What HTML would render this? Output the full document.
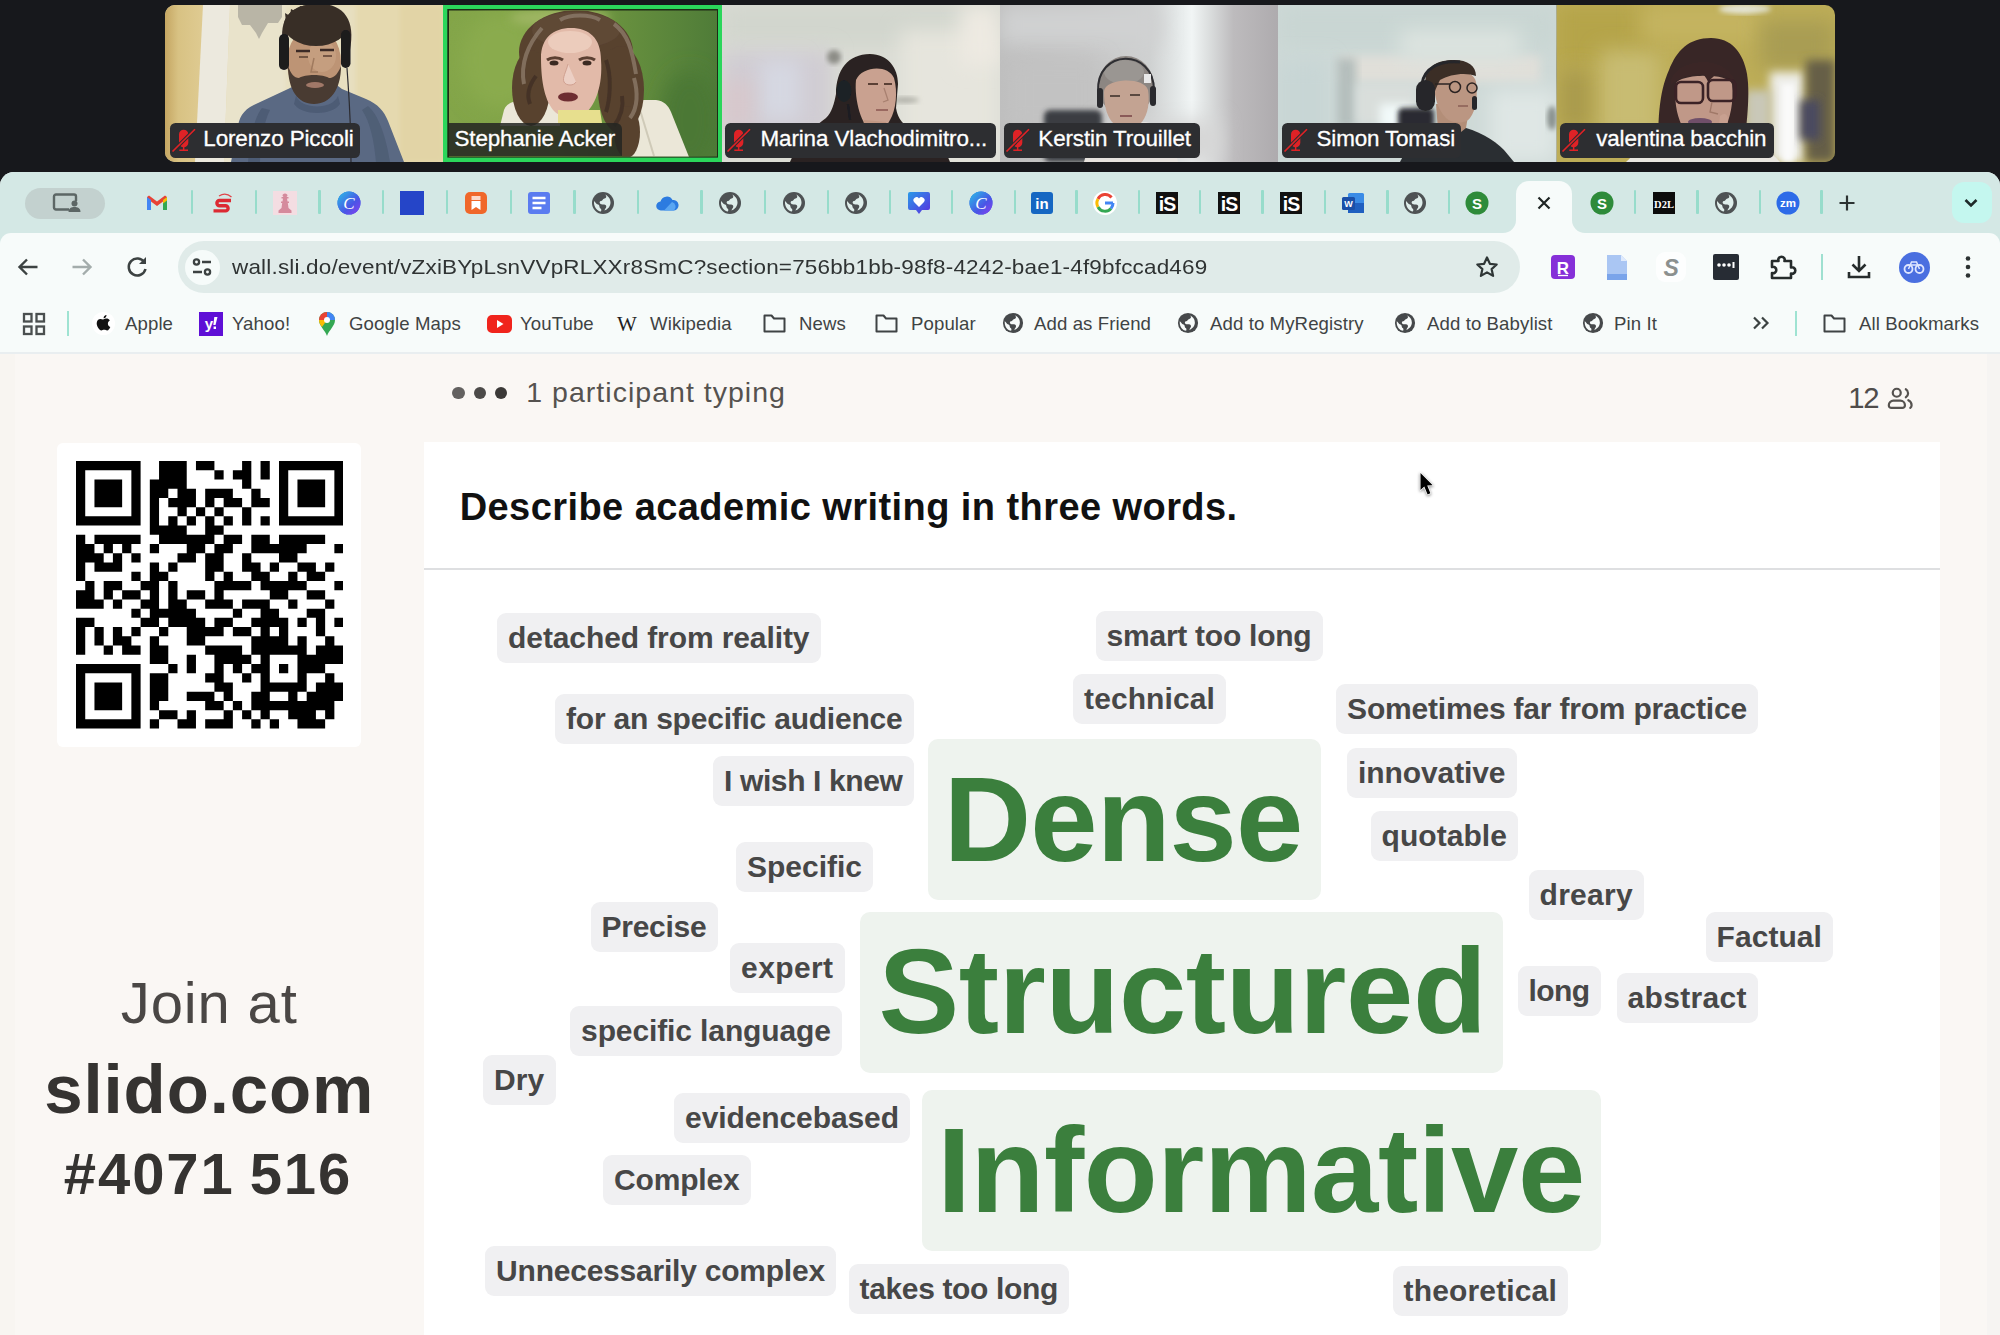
<!DOCTYPE html>
<html><head><meta charset="utf-8"><title>Slido</title><style>
*{box-sizing:border-box;margin:0;padding:0}
html,body{width:2000px;height:1335px;overflow:hidden;background:#17181c;font-family:"Liberation Sans",sans-serif}
.abs{position:absolute}
#win{position:absolute;left:0;top:172px;width:2000px;height:1163px;background:#f7fbfa;border-radius:14px 14px 0 0;overflow:hidden}
#page{position:absolute;left:0;top:181.5px;width:2000px;height:982px;background:#faf7f4}
#card{position:absolute;left:423.5px;top:88.5px;width:1516.5px;height:900px;background:#fff}
#qrc{position:absolute;left:57px;top:89px;width:304px;height:304px;background:#fff;border-radius:6px}
.tg{position:absolute;background:#f0f0f2;border-radius:9px;color:#474747;font-weight:700;font-size:30px;line-height:50px;white-space:nowrap;overflow:visible}
.bg{position:absolute;background:#eef3ee;border-radius:10px;color:#3b7f3d;font-weight:700;font-size:121px;white-space:nowrap}
.bg span{position:absolute;line-height:1}
.nm{position:absolute;top:123.2px;color:#fff;font-size:22.4px;line-height:36px;white-space:nowrap;overflow:hidden}
.nm span{position:absolute;top:-2.1px;-webkit-text-stroke:0.3px #fff}

#tabs{position:absolute;left:0;top:0;width:2000px;height:74px;background:#d4e8e5}
#tbar{position:absolute;left:0;top:60.5px;width:2000px;height:30px;background:#f7fbfa;border-radius:11px 11px 0 0}
.sep{position:absolute;top:18px;width:2.4px;height:24px;background:#97dccb;border-radius:1px}
.ti{position:absolute;top:19px;width:24px;height:24px}
.bk{position:absolute;top:140px;font-size:18.6px;line-height:24px;color:#3f4344;white-space:nowrap}
.bi{position:absolute}
#url{position:absolute;left:178px;top:69px;width:1342px;height:51.5px;border-radius:26px;background:#e0ebe9}
#urlt{position:absolute;left:231.5px;top:83px;font-size:20.4px;line-height:24px;color:#2f3333;white-space:nowrap;letter-spacing:0.16px;transform:scaleX(1.103);transform-origin:0 0}
</style></head>
<body>
<svg class="abs" style="left:165px;top:5px" width="1670" height="157" viewBox="165 5 1670 157"><defs><filter id="b05" x="-10%" y="-10%" width="120%" height="120%"><feGaussianBlur stdDeviation="0.700"/></filter><filter id="b1" x="-20%" y="-20%" width="140%" height="140%"><feGaussianBlur stdDeviation="1.200"/></filter><filter id="b2" x="-20%" y="-20%" width="140%" height="140%"><feGaussianBlur stdDeviation="2.500"/></filter><filter id="b4" x="-30%" y="-30%" width="160%" height="160%"><feGaussianBlur stdDeviation="5"/></filter><filter id="b8" x="-50%" y="-50%" width="200%" height="200%"><feGaussianBlur stdDeviation="10"/></filter><clipPath id="c1"><path d="M175 5h268v157H175a10 10 0 0 1-10-10V15a10 10 0 0 1 10-10z"/></clipPath><clipPath id="c2"><rect x="449" y="10.400" width="268" height="146"/></clipPath><clipPath id="c3"><rect x="722" y="5" width="278" height="157"/></clipPath><clipPath id="c4"><rect x="1000" y="5" width="278" height="157"/></clipPath><clipPath id="c5"><rect x="1278" y="5" width="278.700" height="157"/></clipPath><clipPath id="c6"><path d="M1556.700 5H1825a10 10 0 0 1 10 10v137a10 10 0 0 1-10 10H1556.700z"/></clipPath><linearGradient id="lw" x1="0" x2="1"><stop offset="0" stop-color="#c5a662"/><stop offset=".35" stop-color="#d8c283"/><stop offset="1" stop-color="#dfcb92"/></linearGradient><linearGradient id="g2" x1="0" x2="1"><stop offset="0" stop-color="#83a549"/><stop offset=".4" stop-color="#7ea245"/><stop offset=".6" stop-color="#6a923f"/><stop offset="1" stop-color="#4f7c38"/></linearGradient><linearGradient id="g4" x1="0" x2="1"><stop offset="0" stop-color="#bebebe"/><stop offset=".3" stop-color="#c5c5c5"/><stop offset=".54" stop-color="#cfd1d1"/><stop offset=".63" stop-color="#e2e6e6"/><stop offset=".69" stop-color="#f1f5f5"/><stop offset=".75" stop-color="#dcdfdf"/><stop offset=".84" stop-color="#bdbbbd"/><stop offset="1" stop-color="#aeabae"/></linearGradient></defs><g clip-path="url(#c1)"><rect x="165" y="5" width="278" height="157" fill="#e5d9af"/><rect x="165" y="5" width="38" height="157" fill="url(#lw)"/><path d="M203 5h27l-6 157h-29z" fill="#ece9de"/><path d="M230 5h60v157h-66z" fill="#e9e3cb"/><rect x="286" y="5" width="70" height="157" fill="#e7dfc0" filter="url(#b2)"/><path d="M238 5h44v12l-4 6h-10l-6 10-3 6-3-6-6-8h-8l-4-8z" fill="#b9b5a6" filter="url(#b05)"/><rect x="400" y="5" width="43" height="157" fill="#e2d4a6" filter="url(#b2)"/><g filter="url(#b05)"><path d="M231 162l7-36c2-12 8-18 20-23l30-14 12-6h34l8 6 24 10c12 5 18 12 22 22l16 41z" fill="#5a6983"/><path d="M262 108c-8 10-12 30-14 54h12c0-20 4-40 10-52z" fill="#48566e" opacity=".7"/><path d="M368 106c10 8 18 30 22 56h-14c-2-22-6-40-14-52z" fill="#48566e" opacity=".6"/><path d="M298 84c4 20 32 22 38 0l-2-14h-34z" fill="#b48c6c"/><path d="M296 96c6 14 36 14 42 0l2 8c-8 12-38 12-46 0z" fill="#4d5b75"/><ellipse cx="314" cy="62" rx="27" ry="35" fill="#bd9474"/><ellipse cx="322" cy="56" rx="14" ry="16" fill="#c9a284" opacity=".7"/><path d="M288 66c0 24 10 38 26 38s27-14 27-38c-4 10-8 12-12 12-6-4-24-4-30 0-5 0-8-4-11-12z" fill="#4a3a30"/><ellipse cx="315" cy="85" rx="9" ry="3" fill="#a07868"/><path d="M284 52c-6-30 2-46 30-48 30-2 42 16 36 46-2-14-8-22-14-24-10 4-28 4-40 0-6 4-10 12-12 26z" fill="#382e28"/><ellipse cx="316" cy="25" rx="32" ry="21" fill="#382e28"/><path d="M286 22l-1-9 5 3 1-7 6 3 3-6 6 3 5-4 5 4 6-3 4 5 6-2 2 6 6-1-1 8 5 1-4 8z" fill="#382e28"/><rect x="279" y="34" width="10" height="36" rx="5" fill="#1a1a1e"/><rect x="341" y="30" width="9.500" height="38" rx="4.700" fill="#1a1a1e"/><path d="M347 68c2 30 4 50 4 94" stroke="#2c2c30" stroke-width="1.200" fill="none"/><path d="M296 51h14M320 50h14" stroke="#3a2c26" stroke-width="2.500"/><path d="M299 57h9M323 56h9" stroke="#5a4032" stroke-width="1.500"/><path d="M314 58l-3 14h7" stroke="#a07a5e" stroke-width="1.500" fill="none"/></g></g><rect x="443" y="5" width="279" height="157" fill="#2bd65b"/><rect x="447.300" y="9" width="270.700" height="148.600" fill="#1f2a16"/><g clip-path="url(#c2)"><rect x="449" y="10" width="268" height="147" fill="url(#g2)"/><ellipse cx="500" cy="60" rx="40" ry="50" fill="#8aab4d" filter="url(#b8)"/><ellipse cx="690" cy="120" rx="30" ry="50" fill="#4b7836" filter="url(#b8)"/><ellipse cx="560" cy="18" rx="50" ry="10" fill="#9db562" filter="url(#b4)"/><g filter="url(#b05)"><path d="M500 126l4-16c2-6 8-9 16-9h40v25zM626 100h30c8 1 12 5 15 12l18 45h-63z" fill="#ebe7d8"/><path d="M640 110l14 46" stroke="#cfcab8" stroke-width="2" fill="none"/><ellipse cx="576" cy="52" rx="57" ry="42" fill="#58422f"/><ellipse cx="531" cy="88" rx="19" ry="38" fill="#58422f"/><ellipse cx="621" cy="90" rx="23" ry="44" fill="#58422f"/><ellipse cx="627" cy="132" rx="13" ry="26" fill="#58422f"/><ellipse cx="576" cy="30" rx="44" ry="18" fill="#5e4836"/><path d="M524 84c-4-20 4-40 18-56M636 74c-4-24-8-40-22-50M630 118c8-10 8-26 4-40M560 20c10-6 30-6 40 0" stroke="#8f7e6c" stroke-width="4" fill="none" opacity=".75"/><path d="M530 104c-4-10 0-20 6-28M614 126c6-8 10-18 8-30M606 60c6 16 4 40 0 52" stroke="#392a20" stroke-width="4" fill="none" opacity=".6"/><path d="M541 58c0-20 12-30 30-30s30 10 30 32c2 26-6 44-14 52-8 6-26 6-32 0-10-10-14-30-14-54z" fill="#e2baa9"/><ellipse cx="570" cy="42" rx="22" ry="11" fill="#ecccbc"/><path d="M558 110h42l2 13h-44z" fill="#e7df8e"/><path d="M547 60c4-3 12-3 16 0M579 60c4-3 12-3 16 0" stroke="#5c4033" stroke-width="3" fill="none"/><ellipse cx="554" cy="63" rx="4.500" ry="2.500" fill="#3a2a22"/><ellipse cx="587" cy="63" rx="4.500" ry="2.500" fill="#3a2a22"/><path d="M568 64c-2 8-6 14-4 18s10 4 12 0" fill="#eccfc4" stroke="#d0a090" stroke-width="1"/><ellipse cx="568" cy="97" rx="10" ry="4.500" fill="#6e2d33"/></g></g><g clip-path="url(#c3)"><rect x="722" y="5" width="278" height="157" fill="#dadcd4"/><rect x="722" y="5" width="278" height="40" fill="#d2d6ce" filter="url(#b8)"/><rect x="900" y="30" width="100" height="132" fill="#e6e5dd" filter="url(#b8)"/><rect x="960" y="5" width="40" height="60" fill="#eeeae2" filter="url(#b8)"/><rect x="722" y="50" width="110" height="90" fill="#d0ccd3" filter="url(#b8)"/><rect x="760" y="60" width="40" height="60" fill="#d6d8e2" filter="url(#b8)"/><rect x="722" y="80" width="30" height="50" fill="#d8c8cc" filter="url(#b8)"/><ellipse cx="834" cy="57" rx="7" ry="7" fill="#8c8c86" filter="url(#b2)"/><ellipse cx="905" cy="100" rx="14" ry="3" fill="#b0b0a8" filter="url(#b2)"/><g filter="url(#b05)"><path d="M790 162c8-20 22-34 36-44 6-6 8-14 10-24 0-24 12-40 34-40 18 0 28 14 28 30l-2 24c2 12 8 16 14 22 8 8 16 20 20 32z" fill="#2c2420"/><path d="M856 80c6-14 32-16 38-2 4 14 2 32-4 42-4 8-10 10-18 10-10-2-18-30-16-50z" fill="#c9a190"/><path d="M864 120l22 2 2 16-26 2z" fill="#c09682"/><ellipse cx="844" cy="91" rx="7.500" ry="11" fill="#1a2028"/><path d="M868 84h10M884 84h8" stroke="#5a4036" stroke-width="2"/><path d="M884 88l4 12-5 2" stroke="#a88070" stroke-width="1.300" fill="none"/><path d="M876 110h12" stroke="#9a6860" stroke-width="2"/><path d="M848 104l2 16" stroke="#1a1c20" stroke-width="2.500"/><path d="M796 162l10-24c14-6 120-6 134 0l10 24z" fill="#2a2220"/></g></g><g clip-path="url(#c4)"><rect x="1000" y="5" width="278" height="157" fill="url(#g4)"/><rect x="1000" y="5" width="160" height="40" fill="#d0d1d2" filter="url(#b8)"/><rect x="1010" y="60" width="90" height="70" fill="#c2c2c2" filter="url(#b8)"/><rect x="1100" y="120" width="120" height="42" fill="#d6d6d6" filter="url(#b8)"/><rect x="1044" y="110" width="58" height="52" rx="6" fill="#3a3c42" filter="url(#b2)"/><g filter="url(#b05)"><path d="M1084 162c6-24 16-36 36-40h26c16 4 26 14 32 40z" fill="#e6e2de"/><ellipse cx="1126" cy="86" rx="28" ry="30" fill="#8c8682"/><ellipse cx="1124" cy="72" rx="20" ry="12" fill="#9a9692"/><path d="M1104 92c0-14 40-16 44-2 2 12 0 24-6 32-6 6-24 6-30 0-6-8-8-18-8-30z" fill="#c3a392"/><path d="M1098 92c-2-44 56-44 56-2" fill="none" stroke="#2e2e32" stroke-width="2"/><rect x="1097" y="88" width="6" height="20" rx="3" fill="#2a2a2e"/><rect x="1150" y="86" width="6" height="20" rx="3" fill="#2a2a2e"/><rect x="1144" y="74" width="7" height="9" fill="#e8e8e8"/><path d="M1110 96h10M1130 95h10" stroke="#5a4840" stroke-width="2"/><path d="M1120 116h12" stroke="#8a5a58" stroke-width="2"/></g></g><g clip-path="url(#c5)"><rect x="1278" y="5" width="279" height="157" fill="#ced9d7"/><rect x="1278" y="5" width="279" height="44" fill="#c9d6d3" filter="url(#b8)"/><rect x="1340" y="56" width="200" height="26" fill="#e0dfd9" filter="url(#b4)"/><rect x="1400" y="30" width="120" height="30" fill="#dde4e0" filter="url(#b8)"/><rect x="1336" y="58" width="20" height="70" fill="#b4bebc" filter="url(#b4)"/><rect x="1356" y="84" width="60" height="40" fill="#d9dedb" filter="url(#b4)"/><rect x="1380" y="104" width="30" height="26" fill="#f2fafa" filter="url(#b4)"/><rect x="1490" y="90" width="67" height="72" fill="#dfe7e5" filter="url(#b8)"/><rect x="1278" y="60" width="50" height="102" fill="#c8d6d5" filter="url(#b8)"/><rect x="1398" y="108" width="36" height="22" rx="5" fill="#2a2c30" filter="url(#b2)"/><ellipse cx="1552" cy="118" rx="5" ry="12" fill="#8a928f" filter="url(#b2)"/><g filter="url(#b05)"><path d="M1400 162c6-12 14-22 30-30l28-6c20 4 36 14 46 24l10 12z" fill="#2c2e32"/><path d="M1436 104h34l-4 24-10 8-18-6z" fill="#b38e78"/><path d="M1434 84c0-16 40-18 42-2 2 14 0 28-6 36-4 6-18 6-24 0-8-8-12-22-12-34z" fill="#bb9682"/><path d="M1426 88c-4-22 12-28 28-28 14 0 22 6 22 16-10-4-26-2-36 4-2 4-4 8-6 14z" fill="#3a2e28"/><rect x="1416" y="80" width="19" height="31" rx="9.500" fill="#27272a"/><path d="M1422 84c2-16 18-24 38-22" fill="none" stroke="#27272a" stroke-width="3"/><rect x="1472" y="96" width="5" height="14" rx="2.500" fill="#27272a"/><circle cx="1455" cy="87" r="5.500" fill="none" stroke="#2c2422" stroke-width="1.500"/><circle cx="1472" cy="88" r="5" fill="none" stroke="#2c2422" stroke-width="1.500"/><path d="M1435 84h15" stroke="#2c2422" stroke-width="1.500"/><path d="M1458 106h10" stroke="#8a5e54" stroke-width="1.500"/></g></g><g clip-path="url(#c6)"><rect x="1556" y="5" width="279" height="157" fill="#bdad57"/><rect x="1556" y="5" width="100" height="60" fill="#b5a44a" filter="url(#b8)"/><rect x="1600" y="50" width="60" height="90" fill="#c8bc72" filter="url(#b8)"/><rect x="1560" y="70" width="30" height="60" fill="#a89a4c" filter="url(#b8)"/><rect x="1640" y="5" width="120" height="36" fill="#c4b460" filter="url(#b8)"/><ellipse cx="1745" cy="9" rx="26" ry="5" fill="#e4e4d4" filter="url(#b2)"/><rect x="1760" y="20" width="75" height="50" fill="#a99d52" filter="url(#b8)"/><rect x="1770" y="72" width="34" height="90" fill="#eeeeea" filter="url(#b4)"/><rect x="1782" y="84" width="12" height="78" fill="#fafafa" filter="url(#b2)"/><rect x="1745" y="90" width="26" height="72" fill="#c9c8b8" filter="url(#b4)"/><rect x="1806" y="60" width="29" height="102" fill="#665f46" filter="url(#b4)"/><rect x="1800" y="100" width="20" height="40" fill="#4a4a60" filter="url(#b4)"/><g filter="url(#b05)"><path d="M1659 162c-2-40 0-70 10-92 8-20 20-32 42-32 20 0 32 14 36 36 4 24-2 60-4 88z" fill="#382626"/><path d="M1676 84c2-10 52-12 56 0 2 18-2 36-8 46-4 8-10 12-18 12-12 0-20-6-24-16-6-12-8-28-6-42z" fill="#c09888"/><path d="M1670 86c0-30 60-34 66-2-6-6-14-10-20-10-4 4-8 8-8 8s-2-6-6-8c-12 0-24 4-32 12z" fill="#3a2626"/><rect x="1676" y="82" width="27" height="21" rx="5" fill="none" stroke="#3a2226" stroke-width="2.600"/><rect x="1708" y="80" width="27" height="21" rx="5" fill="none" stroke="#3a2226" stroke-width="2.600"/><path d="M1712 102l-2 10 8 2" stroke="#a07868" stroke-width="1.300" fill="none"/><path d="M1720 116c4-4 8-2 8 4l-2 14h-8z" fill="#c8a090"/><ellipse cx="1700" cy="122" rx="12" ry="4" fill="#70506a"/><path d="M1626 162c10-10 24-18 44-22h70c16 4 30 10 40 22z" fill="#e8e6e0"/></g></g></svg><div class="nm" style="left:169.5px;width:190.5px;height:34.8px;background:#2d2e31;border-radius:5.5px"><div style="position:absolute;left:0;top:3px"><svg width="28" height="28" viewBox="0 0 28 28"><rect x="9" y="3.700" width="9.300" height="17.600" rx="4.650" fill="#df2226"/><path d="M13.650 21v3M9.300 24.200h8.700" stroke="#df2226" stroke-width="1.500" fill="none"/><path d="M25.300 2.900 2.300 25.700" stroke="#2c2d30" stroke-width="3.600"/><path d="M25 3.250 2.500 25.500" stroke="#df2226" stroke-width="1.700"/></svg></div><span style="left:33.8px;letter-spacing:-0.1px">Lorenzo Piccoli</span></div><div class="nm" style="left:449px;width:173px;height:33.2px;background:rgba(36,37,34,.86);border-radius:0 6px 0 0"><span style="left:5.6px;letter-spacing:-0.18px">Stephanie Acker</span></div><div class="nm" style="left:725.2px;width:271.2px;height:34.8px;background:#2d2e31;border-radius:5.5px"><div style="position:absolute;left:0;top:3px"><svg width="28" height="28" viewBox="0 0 28 28"><rect x="9" y="3.700" width="9.300" height="17.600" rx="4.650" fill="#df2226"/><path d="M13.650 21v3M9.300 24.200h8.700" stroke="#df2226" stroke-width="1.500" fill="none"/><path d="M25.300 2.900 2.300 25.700" stroke="#2c2d30" stroke-width="3.600"/><path d="M25 3.250 2.500 25.500" stroke="#df2226" stroke-width="1.700"/></svg></div><span style="left:35.3px;letter-spacing:-0.1px">Marina Vlachodimitro...</span></div><div class="nm" style="left:1004px;width:195.7px;height:34.8px;background:#2d2e31;border-radius:5.5px"><div style="position:absolute;left:0;top:3px"><svg width="28" height="28" viewBox="0 0 28 28"><rect x="9" y="3.700" width="9.300" height="17.600" rx="4.650" fill="#df2226"/><path d="M13.650 21v3M9.300 24.200h8.700" stroke="#df2226" stroke-width="1.500" fill="none"/><path d="M25.300 2.900 2.300 25.700" stroke="#2c2d30" stroke-width="3.600"/><path d="M25 3.250 2.500 25.500" stroke="#df2226" stroke-width="1.700"/></svg></div><span style="left:34.3px;letter-spacing:-0.1px">Kerstin Trouillet</span></div><div class="nm" style="left:1282px;width:179px;height:34.8px;background:#2d2e31;border-radius:5.5px"><div style="position:absolute;left:0;top:3px"><svg width="28" height="28" viewBox="0 0 28 28"><rect x="9" y="3.700" width="9.300" height="17.600" rx="4.650" fill="#df2226"/><path d="M13.650 21v3M9.300 24.200h8.700" stroke="#df2226" stroke-width="1.500" fill="none"/><path d="M25.300 2.900 2.300 25.700" stroke="#2c2d30" stroke-width="3.600"/><path d="M25 3.250 2.500 25.500" stroke="#df2226" stroke-width="1.700"/></svg></div><span style="left:34.5px;letter-spacing:-0.14px">Simon Tomasi</span></div><div class="nm" style="left:1560px;width:213.8px;height:34.8px;background:#2d2e31;border-radius:5.5px"><div style="position:absolute;left:0;top:3px"><svg width="28" height="28" viewBox="0 0 28 28"><rect x="9" y="3.700" width="9.300" height="17.600" rx="4.650" fill="#df2226"/><path d="M13.650 21v3M9.300 24.200h8.700" stroke="#df2226" stroke-width="1.500" fill="none"/><path d="M25.300 2.900 2.300 25.700" stroke="#2c2d30" stroke-width="3.600"/><path d="M25 3.250 2.500 25.500" stroke="#df2226" stroke-width="1.700"/></svg></div><span style="left:36.3px;letter-spacing:-0.18px">valentina bacchin</span></div>
<div id="win">
<div id="tabs"><div class="abs" style="left:25px;top:15.5px;width:80px;height:31px;border-radius:16px;background:#c3d1cf"></div><svg class="abs" style="left:52px;top:20px" width="30" height="22" viewBox="0 0 30 22"><path d="M17 17.500H4a2 2 0 0 1-2-2V4.500a2 2 0 0 1 2-2h18a2 2 0 0 1 2 2V9" fill="none" stroke="#5c6665" stroke-width="2.400"/><circle cx="22.500" cy="11.500" r="3" fill="#5c6665"/><path d="M16.500 20c0-4 3-5 6-5s6 1 6 5z" fill="#5c6665"/></svg><div class="abs" style="left:1516px;top:9px;width:56px;height:52px;background:#f7fbfa;border-radius:13px 13px 0 0"></div><svg class="abs" style="left:1503px;top:47.500px" width="13" height="13" viewBox="0 0 13 13"><path d="M13 0v13H0A13 13 0 0 0 13 0z" fill="#f7fbfa"/></svg><svg class="abs" style="left:1572px;top:47.500px" width="13" height="13" viewBox="0 0 13 13"><path d="M0 0v13h13A13 13 0 0 1 0 0z" fill="#f7fbfa"/></svg><div class="sep" style="left:190.8px"></div><div class="sep" style="left:254.8px"></div><div class="sep" style="left:318.3px"></div><div class="sep" style="left:381.8px"></div><div class="sep" style="left:445.8px"></div><div class="sep" style="left:509.8px"></div><div class="sep" style="left:573.3px"></div><div class="sep" style="left:636.8px"></div><div class="sep" style="left:700.3px"></div><div class="sep" style="left:763.8px"></div><div class="sep" style="left:826.8px"></div><div class="sep" style="left:888.8px"></div><div class="sep" style="left:950.8px"></div><div class="sep" style="left:1013.8px"></div><div class="sep" style="left:1075.3px"></div><div class="sep" style="left:1137.8px"></div><div class="sep" style="left:1198.8px"></div><div class="sep" style="left:1261.3px"></div><div class="sep" style="left:1323.8px"></div><div class="sep" style="left:1386.3px"></div><div class="sep" style="left:1447.8px"></div><div class="sep" style="left:1633.8px"></div><div class="sep" style="left:1696.3px"></div><div class="sep" style="left:1758.8px"></div><div class="sep" style="left:1820.3px"></div><svg class="ti" style="left:145px" viewBox="0 0 24 24"><path d="M2 6v13h4V10.500l6 4.500 6-4.500V19h4V6l-2-1.500-8 6-8-6z" fill="#e94235"/><path d="M2 6v13h4V9z" fill="#4285f4"/><path d="M22 6v13h-4V9z" fill="#34a853"/><path d="M18 9l4-3v3.500l-4 3z" fill="#fbbc04"/></svg><svg class="ti" style="left:210px" viewBox="0 0 24 24"><path d="M21 9.500H9.500a2.600 2.600 0 0 0 0 5.200h6a2.600 2.600 0 0 1 0 5.200H3.500" fill="none" stroke="#dc2a33" stroke-width="3.400"/><path d="M9 5c4-2.500 9-2 12.500 1" fill="none" stroke="#e0444a" stroke-width="1.300"/></svg><svg class="ti" style="left:273px" viewBox="0 0 24 24"><rect x="0" y="0" width="24" height="24" fill="#f4dde2"/><path d="M12 2.500c1.500 0 2.500 1 2.500 2.200l-1 1.300h2v1.500h-1.500l.5 3h1.500v1.500h-1.200l.7 5 3 2.500v2.500h-13v-2.500l3-2.500.7-5H8v-1.500h1.500l.5-3H8.500V6h2l-1-1.300C9.500 3.500 10.500 2.500 12 2.500z" fill="#d58a9c"/></svg><svg class="ti" style="left:337px" viewBox="0 0 24 24"><circle cx="12" cy="12" r="11.5" fill="#3f6fe6"/><circle cx="12" cy="12" r="11.5" fill="url(#cg)"/><defs><linearGradient id="cg" x1="0" y1="0" x2="1" y2="1"><stop offset="0" stop-color="#27c1e6"/><stop offset=".6" stop-color="#4a55e6"/><stop offset="1" stop-color="#8a3ff0"/></linearGradient></defs><text x="12" y="18" font-family="Liberation Serif" font-size="17" font-weight="400" fill="#fff" text-anchor="middle" font-style="italic">C</text></svg><svg class="ti" style="left:400px" viewBox="0 0 24 24"><rect x="0" y="0" width="24" height="24" fill="#2545c8"/></svg><svg class="ti" style="left:464px" viewBox="0 0 24 24"><rect x="1" y="1" width="22" height="22" rx="5" fill="#f0672a"/><path d="M7.500 10h9v9l-4.500-3-4.500 3z" fill="#fff"/><path d="M7.500 6h9M7.500 8h9" stroke="#fff" stroke-width="1.300"/></svg><svg class="ti" style="left:527px" viewBox="0 0 24 24"><rect x="1" y="1" width="22" height="22" rx="3" fill="#5b7cf0"/><path d="M5.500 7h13M5.500 12h13M5.500 17h9" stroke="#fff" stroke-width="2.400"/></svg><svg class="ti" style="left:591px" viewBox="0 0 24 24"><circle cx="12" cy="12" r="11" fill="#4e5254"/><path d="M14 3.5c2 1.5 1.5 3.5-.5 4s-2 2.500-3.500 2.500S8 12 9.500 13s4.500-.5 5.500 1.500-1 3-1.500 5c3-1 6-4 6-8s-2.500-6.500-5.500-8zM3 10c1.500 1 2 3 4 3.500s1 3 2.500 4 .5 2.500 .5 3C6 20 2.500 16 3 10z" fill="#dfeeeb"/></svg><svg class="ti" style="left:655px" viewBox="0 0 24 24"><path d="M6 19.500a4.500 4.500 0 0 1-.5-9 6.500 6.500 0 0 1 12-1.500 5 5 0 0 1 1.500 10.500z" fill="#2c7be0"/><path d="M9 19.500l8-8.500a5 5 0 0 1 2 8.500z" fill="#5aa6f2"/></svg><svg class="ti" style="left:718px" viewBox="0 0 24 24"><circle cx="12" cy="12" r="11" fill="#4e5254"/><path d="M14 3.5c2 1.5 1.5 3.5-.5 4s-2 2.500-3.500 2.500S8 12 9.500 13s4.500-.5 5.500 1.500-1 3-1.500 5c3-1 6-4 6-8s-2.500-6.500-5.500-8zM3 10c1.500 1 2 3 4 3.500s1 3 2.500 4 .5 2.500 .5 3C6 20 2.500 16 3 10z" fill="#dfeeeb"/></svg><svg class="ti" style="left:782px" viewBox="0 0 24 24"><circle cx="12" cy="12" r="11" fill="#4e5254"/><path d="M14 3.5c2 1.5 1.5 3.5-.5 4s-2 2.500-3.500 2.500S8 12 9.500 13s4.500-.5 5.500 1.500-1 3-1.500 5c3-1 6-4 6-8s-2.500-6.500-5.500-8zM3 10c1.500 1 2 3 4 3.500s1 3 2.500 4 .5 2.500 .5 3C6 20 2.500 16 3 10z" fill="#dfeeeb"/></svg><svg class="ti" style="left:844px" viewBox="0 0 24 24"><circle cx="12" cy="12" r="11" fill="#4e5254"/><path d="M14 3.5c2 1.5 1.5 3.5-.5 4s-2 2.500-3.500 2.500S8 12 9.500 13s4.500-.5 5.500 1.500-1 3-1.500 5c3-1 6-4 6-8s-2.500-6.500-5.500-8zM3 10c1.500 1 2 3 4 3.500s1 3 2.500 4 .5 2.500 .5 3C6 20 2.500 16 3 10z" fill="#dfeeeb"/></svg><svg class="ti" style="left:907px" viewBox="0 0 24 24"><defs><linearGradient id="hg" x1="0" y1="0" x2="1" y2="1"><stop offset="0" stop-color="#2a9ae8"/><stop offset="1" stop-color="#5a2fe0"/></linearGradient></defs><path d="M3 1h18a2 2 0 0 1 2 2v14a2 2 0 0 1-2 2h-6l-3 4-3-4H3a2 2 0 0 1-2-2V3a2 2 0 0 1 2-2z" fill="url(#hg)"/><path d="M12 16l-5-5a3 3 0 0 1 5-3.500 3 3 0 0 1 5 3.500z" fill="#fff"/></svg><svg class="ti" style="left:969px" viewBox="0 0 24 24"><circle cx="12" cy="12" r="11.5" fill="#3f6fe6"/><circle cx="12" cy="12" r="11.5" fill="url(#cg)"/><text x="12" y="18" font-family="Liberation Serif" font-size="17" font-weight="400" fill="#fff" text-anchor="middle" font-style="italic">C</text></svg><svg class="ti" style="left:1030px" viewBox="0 0 24 24"><rect x="1" y="1" width="22" height="22" rx="3" fill="#1667c2"/><text x="12" y="18" font-family="Liberation Sans" font-size="15" font-weight="700" fill="#fff" text-anchor="middle" >in</text></svg><svg class="ti" style="left:1093px" viewBox="0 0 24 24"><circle cx="12" cy="12" r="12" fill="#fff"/><path d="M12 12h8" stroke="#4285f4" stroke-width="3"/><path d="M18.500 6.500A8 8 0 0 0 5 8" fill="none" stroke="#ea4335" stroke-width="3"/><path d="M5 8a8 8 0 0 0 0 8" fill="none" stroke="#fbbc05" stroke-width="3"/><path d="M5 16a8 8 0 0 0 13 1.500" fill="none" stroke="#34a853" stroke-width="3"/><path d="M18 17.500A8 8 0 0 0 20 12" fill="none" stroke="#4285f4" stroke-width="3"/></svg><svg class="ti" style="left:1155px" viewBox="0 0 24 24"><rect x="1" y="1" width="22" height="22" rx="0" fill="#111"/><text x="12" y="19.5" font-family="Liberation Sans" font-size="19.5" font-weight="700" fill="#fff" text-anchor="middle" letter-spacing="-1">iS</text></svg><svg class="ti" style="left:1217px" viewBox="0 0 24 24"><rect x="1" y="1" width="22" height="22" rx="0" fill="#111"/><text x="12" y="19.5" font-family="Liberation Sans" font-size="19.5" font-weight="700" fill="#fff" text-anchor="middle" letter-spacing="-1">iS</text></svg><svg class="ti" style="left:1279px" viewBox="0 0 24 24"><rect x="1" y="1" width="22" height="22" rx="0" fill="#111"/><text x="12" y="19.5" font-family="Liberation Sans" font-size="19.5" font-weight="700" fill="#fff" text-anchor="middle" letter-spacing="-1">iS</text></svg><svg class="ti" style="left:1341px" viewBox="0 0 24 24"><rect x="7" y="2" width="16" height="20" rx="1.500" fill="#3a8be6"/><rect x="7" y="12" width="16" height="10" fill="#1f5fc0"/><rect x="1" y="6" width="13" height="13" rx="1.500" fill="#1a4fa8"/><text x="7.5" y="16" font-family="Liberation Sans" font-size="9" font-weight="700" fill="#fff" text-anchor="middle" >W</text></svg><svg class="ti" style="left:1403px" viewBox="0 0 24 24"><circle cx="12" cy="12" r="11" fill="#4e5254"/><path d="M14 3.5c2 1.5 1.5 3.5-.5 4s-2 2.500-3.500 2.500S8 12 9.500 13s4.500-.5 5.500 1.500-1 3-1.500 5c3-1 6-4 6-8s-2.500-6.500-5.500-8zM3 10c1.500 1 2 3 4 3.500s1 3 2.500 4 .5 2.500 .5 3C6 20 2.500 16 3 10z" fill="#dfeeeb"/></svg><svg class="ti" style="left:1465px" viewBox="0 0 24 24"><circle cx="12" cy="12" r="11.5" fill="#2e8b3a"/><text x="12" y="17.5" font-family="Liberation Sans" font-size="15" font-weight="700" fill="#fff" text-anchor="middle" >S</text></svg><svg class="ti" style="left:1532px" viewBox="0 0 24 24"><path d="M6.500 6.500l11 11M17.500 6.500l-11 11" stroke="#1f2524" stroke-width="2.200"/></svg><svg class="ti" style="left:1590px" viewBox="0 0 24 24"><circle cx="12" cy="12" r="11.5" fill="#2e8b3a"/><text x="12" y="17.5" font-family="Liberation Sans" font-size="15" font-weight="700" fill="#fff" text-anchor="middle" >S</text></svg><svg class="ti" style="left:1652px" viewBox="0 0 24 24"><rect x="1" y="1" width="22" height="22" rx="0" fill="#0c0c0c"/><text x="12" y="16.5" font-family="Liberation Serif" font-size="10.5" font-weight="700" fill="#fff" text-anchor="middle" >D2L</text></svg><svg class="ti" style="left:1714px" viewBox="0 0 24 24"><circle cx="12" cy="12" r="11" fill="#4e5254"/><path d="M14 3.5c2 1.5 1.5 3.5-.5 4s-2 2.500-3.500 2.500S8 12 9.500 13s4.500-.5 5.500 1.500-1 3-1.500 5c3-1 6-4 6-8s-2.500-6.500-5.500-8zM3 10c1.500 1 2 3 4 3.500s1 3 2.500 4 .5 2.500 .5 3C6 20 2.500 16 3 10z" fill="#dfeeeb"/></svg><svg class="ti" style="left:1776px" viewBox="0 0 24 24"><circle cx="12" cy="12" r="11.5" fill="#2d6be8"/><text x="12" y="16" font-family="Liberation Sans" font-size="11.5" font-weight="700" fill="#fff" text-anchor="middle" >zm</text></svg><svg class="ti" style="left:1835px" viewBox="0 0 24 24"><path d="M12 4.500v15M4.500 12h15" stroke="#2c3332" stroke-width="2.200"/></svg><div class="abs" style="left:1952px;top:10px;width:39.5px;height:41px;border-radius:12px;background:#c4f7ef"></div><svg class="abs" style="left:1961px;top:22px" width="20" height="18" viewBox="0 0 20 18"><path d="M4.500 6l5.500 5.500L15.500 6" fill="none" stroke="#1f2a29" stroke-width="2.600"/></svg></div><div id="tbar"></div><svg class="abs" style="left:15px;top:82px" width="26" height="26" viewBox="0 0 26 26"><path d="M22.500 13H5M12 5.500L4.500 13l7.500 7.500" fill="none" stroke="#3c4242" stroke-width="2.400"/></svg><svg class="abs" style="left:69px;top:82px" width="26" height="26" viewBox="0 0 26 26"><path d="M3.500 13H21M14 5.500l7.500 7.500-7.500 7.500" fill="none" stroke="#a3acab" stroke-width="2.400"/></svg><svg class="abs" style="left:124px;top:82px" width="26" height="26" viewBox="0 0 26 26"><path d="M20.500 8.500A8.500 8.500 0 1 0 21.500 15" fill="none" stroke="#3c4242" stroke-width="2.500"/><path d="M22 3v7h-7z" fill="#3c4242"/></svg><div id="url"></div><div class="abs" style="left:184.500px;top:77.500px;width:35px;height:35px;border-radius:50%;background:#f6fbfa"></div><svg class="abs" style="left:191px;top:84px" width="22" height="22" viewBox="0 0 22 22" fill="none" stroke="#3c4242" stroke-width="2.300"><circle cx="5.500" cy="6" r="2.600"/><path d="M11 6h9M2 16h9"/><circle cx="16.500" cy="16" r="2.600"/></svg><div id="urlt">wall.sli.do/event/vZxiBYpLsnVVpRLXXr8SmC?section=756bb1bb-98f8-4242-bae1-4f9bfccad469</div><svg class="abs" style="left:1474px;top:82px" width="26" height="26" viewBox="0 0 26 26"><path d="M13 3.500l2.900 6.300 6.800.7-5.100 4.600 1.500 6.800L13 18.400 6.900 21.900l1.500-6.800L3.300 10.500l6.800-.7z" fill="none" stroke="#2f3636" stroke-width="2.200" stroke-linejoin="round"/></svg><svg class="abs" style="left:1550px;top:82px" width="26" height="26" viewBox="0 0 26 26"><rect x="1" y="1" width="24" height="24" rx="4" fill="#8630d8"/><text x="13" y="19.500" font-family="Liberation Sans" font-weight="700" font-size="17" fill="#fff" text-anchor="middle">R</text><path d="M8 21.500h10" stroke="#fff" stroke-width="1.300"/></svg><svg class="abs" style="left:1605px;top:82px" width="24" height="27" viewBox="0 0 24 27"><path d="M2 1h14l6 6v19H2z" fill="#aac6f3"/><path d="M16 1v6h6z" fill="#dfeafc"/><rect x="2" y="20" width="20" height="6" fill="#7aa4ea"/></svg><div class="abs" style="left:1656px;top:80px;width:30px;height:30px;border-radius:9px;background:#fdfefe"></div><div class="abs" style="left:1663.500px;top:82px;font-size:23px;font-style:italic;font-weight:700;color:#8b908f;line-height:28px">S</div><svg class="abs" style="left:1713px;top:82px" width="26" height="26" viewBox="0 0 26 26"><rect x="0" y="0" width="26" height="26" rx="2" fill="#272c34"/><circle cx="6" cy="11" r="1.800" fill="#fff"/><circle cx="11" cy="11" r="1.800" fill="#fff"/><circle cx="16" cy="11" r="1.800" fill="#fff"/><rect x="19.500" y="8" width="2" height="6" fill="#fff"/></svg><svg class="abs" style="left:1767px;top:80px" width="30" height="30" viewBox="0 0 30 30"><path d="M5 9h6.500a3.200 3.200 0 1 1 6 0H24v6.500a3.200 3.200 0 1 1 0 6V26H5v-5a3.200 3.200 0 1 0 0-6z" fill="none" stroke="#262c2c" stroke-width="2.600" stroke-linejoin="round"/></svg><div class="abs" style="left:1821px;top:82px;width:2.400px;height:26px;background:#9fe0d0"></div><svg class="abs" style="left:1845px;top:81px" width="28" height="28" viewBox="0 0 28 28"><path d="M14 3v14M7.500 11.500L14 18l6.500-6.500M4 19v5h20v-5" fill="none" stroke="#262c2c" stroke-width="2.600"/></svg><div class="abs" style="left:1898.500px;top:79.500px;width:31px;height:31px;border-radius:50%;background:#4a6fe0"></div><svg class="abs" style="left:1903px;top:87px" width="22" height="16" viewBox="0 0 22 16"><circle cx="5.500" cy="10" r="4" fill="none" stroke="#dfe6ff" stroke-width="1.800"/><circle cx="16.500" cy="10" r="4" fill="none" stroke="#dfe6ff" stroke-width="1.800"/><path d="M5.500 10l3-7h5l3 7M8 6h6" fill="none" stroke="#dfe6ff" stroke-width="1.500"/></svg><svg class="abs" style="left:1962px;top:82px" width="12" height="26" viewBox="0 0 12 26"><circle cx="6" cy="4.500" r="2.300" fill="#2c3232"/><circle cx="6" cy="13" r="2.300" fill="#2c3232"/><circle cx="6" cy="21.500" r="2.300" fill="#2c3232"/></svg><svg class="bi" style="left:22px;top:139.500px" width="24" height="24" viewBox="0 0 24 24" fill="none" stroke="#4a4f4f" stroke-width="2.300"><rect x="2" y="2" width="7.500" height="7.500"/><rect x="14.500" y="2" width="7.500" height="7.500"/><rect x="2" y="14.500" width="7.500" height="7.500"/><rect x="14.500" y="14.500" width="7.500" height="7.500"/></svg><div class="abs" style="left:67px;top:139px;width:2.400px;height:25px;background:#9fe3d2"></div><div class="abs" style="left:92px;top:140px;width:23px;height:23px;border-radius:50%;background:#fff"></div><svg class="bi" style="left:96px;top:143px" width="15" height="17" viewBox="0 0 15 17"><path d="M10.500 0c.2 1.500-1.200 3.300-2.900 3.200C7.400 1.700 9 .1 10.500 0zM7.600 4.300c.9 0 1.700-.7 3-.7 1.200 0 2.400.6 3.200 1.800-2.800 1.600-2.300 5.500.5 6.600-.6 1.500-1.800 3.500-3.200 3.500-1.200 0-1.500-.7-2.900-.7s-1.800.7-2.900.7C3.500 15.500.7 11.500.7 8.300.7 5.500 2.600 4 4.400 4c1.300 0 2.300.8 3.200.3z" fill="#111"/></svg><div class="bk" style="left:125px;letter-spacing:0.1px">Apple</div><svg class="bi" style="left:198.500px;top:139.500px" width="24" height="24" viewBox="0 0 24 24"><rect width="24" height="24" fill="#5f0fd6"/><text x="10" y="17" font-family="Liberation Sans" font-weight="700" font-size="15" fill="#fff" text-anchor="middle">y</text><path d="M18.500 5l-2 8h-2.200l1-8zM14.600 14.500h2.400v2.400h-2.400z" fill="#fff"/></svg><div class="bk" style="left:232px;letter-spacing:0.1px">Yahoo!</div><svg class="bi" style="left:318px;top:138.500px" width="18" height="26" viewBox="0 0 18 26"><path d="M9 25C7 19 1 15 1 9a8 8 0 0 1 16 0c0 6-6 10-8 16z" fill="#34a853"/><path d="M9 1a8 8 0 0 1 8 8l-8 0z" fill="#4285f4"/><path d="M1 9a8 8 0 0 1 8-8v8z" fill="#ea4335"/><path d="M1 9h8l-5 7C2.500 14 1 12 1 9z" fill="#fbbc04"/><circle cx="9" cy="9" r="3" fill="#fff"/></svg><div class="bk" style="left:349px;letter-spacing:0.12px">Google Maps</div><svg class="bi" style="left:486.500px;top:143px" width="25" height="18" viewBox="0 0 25 18"><rect width="25" height="18" rx="5" fill="#f0241c"/><path d="M10 5l6.500 4L10 13z" fill="#fff"/></svg><div class="bk" style="left:520px;letter-spacing:0.1px">YouTube</div><div class="abs" style="left:617px;top:138.500px;font-family:'Liberation Serif',serif;font-size:21px;line-height:26px;color:#222">W</div><div class="bk" style="left:650px;letter-spacing:0.12px">Wikipedia</div><svg class="bi" style="left:762px;top:140px" width="25" height="22" viewBox="0 0 25 22"><path d="M2.500 3.500h7l2.500 3h10.500v13h-20z" fill="none" stroke="#3f4344" stroke-width="2" stroke-linejoin="round"/></svg><div class="bk" style="left:799px;letter-spacing:0.1px">News</div><svg class="bi" style="left:874px;top:140px" width="25" height="22" viewBox="0 0 25 22"><path d="M2.500 3.500h7l2.500 3h10.500v13h-20z" fill="none" stroke="#3f4344" stroke-width="2" stroke-linejoin="round"/></svg><div class="bk" style="left:911px;letter-spacing:0.1px">Popular</div><svg class="bi" style="left:1002px;top:140px" width="22" height="22" viewBox="0 0 24 24"><circle cx="12" cy="12" r="11" fill="#46494b"/><path d="M14 3.500c2 1.500 1.500 3.500-.5 4s-2 2.500-3.500 2.500S8 12 9.500 13s4.500-.5 5.500 1.500-1 3-1.500 5c3-1 6-4 6-8s-2.500-6.500-5.500-8zM3 10c1.500 1 2 3 4 3.500s1 3 2.500 4 .5 2.500 .5 3C6 20 2.500 16 3 10z" fill="#f7fbfa"/></svg><div class="bk" style="left:1034px;letter-spacing:0.1px">Add as Friend</div><svg class="bi" style="left:1177px;top:140px" width="22" height="22" viewBox="0 0 24 24"><circle cx="12" cy="12" r="11" fill="#46494b"/><path d="M14 3.500c2 1.500 1.500 3.500-.5 4s-2 2.500-3.500 2.500S8 12 9.500 13s4.500-.5 5.500 1.500-1 3-1.500 5c3-1 6-4 6-8s-2.500-6.500-5.500-8zM3 10c1.500 1 2 3 4 3.500s1 3 2.500 4 .5 2.500 .5 3C6 20 2.500 16 3 10z" fill="#f7fbfa"/></svg><div class="bk" style="left:1210px;letter-spacing:0.1px">Add to MyRegistry</div><svg class="bi" style="left:1394px;top:140px" width="22" height="22" viewBox="0 0 24 24"><circle cx="12" cy="12" r="11" fill="#46494b"/><path d="M14 3.500c2 1.500 1.500 3.500-.5 4s-2 2.500-3.500 2.500S8 12 9.500 13s4.500-.5 5.500 1.500-1 3-1.500 5c3-1 6-4 6-8s-2.500-6.500-5.500-8zM3 10c1.500 1 2 3 4 3.500s1 3 2.500 4 .5 2.500 .5 3C6 20 2.500 16 3 10z" fill="#f7fbfa"/></svg><div class="bk" style="left:1427px;letter-spacing:0.1px">Add to Babylist</div><svg class="bi" style="left:1582px;top:140px" width="22" height="22" viewBox="0 0 24 24"><circle cx="12" cy="12" r="11" fill="#46494b"/><path d="M14 3.500c2 1.500 1.500 3.500-.5 4s-2 2.500-3.500 2.500S8 12 9.500 13s4.500-.5 5.500 1.500-1 3-1.500 5c3-1 6-4 6-8s-2.500-6.500-5.500-8zM3 10c1.500 1 2 3 4 3.500s1 3 2.500 4 .5 2.500 .5 3C6 20 2.500 16 3 10z" fill="#f7fbfa"/></svg><div class="bk" style="left:1614px;letter-spacing:0.1px">Pin It</div><svg class="bi" style="left:1751px;top:142px" width="20" height="18" viewBox="0 0 20 18"><path d="M3 3.500L8.500 9 3 14.500M11 3.500L16.500 9 11 14.500" fill="none" stroke="#3c4242" stroke-width="2.200"/></svg><div class="abs" style="left:1795px;top:139px;width:2.400px;height:25px;background:#9fe3d2"></div><svg class="bi" style="left:1822px;top:140px" width="25" height="22" viewBox="0 0 25 22"><path d="M2.500 3.500h7l2.500 3h10.500v13h-20z" fill="none" stroke="#3f4344" stroke-width="2" stroke-linejoin="round"/></svg><div class="bk" style="left:1859px;letter-spacing:0.1px">All Bookmarks</div><div class="abs" style="left:0;top:180px;width:2000px;height:1.500px;background:#e9eef0"></div>
<div id="page">
<div class="abs" style="left:0;top:0;width:15px;height:982px;background:#f8f5f1"></div>
<div class="abs" style="left:1987px;top:0;width:13px;height:982px;background:#f6f4f2"></div>
<div id="card"></div>
<div id="qrc"></div>
</div>
</div>
<!-- page content in absolute body coords -->
<div class="abs" style="left:423.5px;top:568px;width:1516.5px;height:2px;background:#dedfe1"></div>
<div class="abs" style="left:452.2px;top:386.6px;width:12.6px;height:12.6px;border-radius:50%;background:#636160"></div>
<div class="abs" style="left:473.7px;top:386.6px;width:12.6px;height:12.6px;border-radius:50%;background:#4c4a48"></div>
<div class="abs" style="left:494.9px;top:386.6px;width:12.6px;height:12.6px;border-radius:50%;background:#3b3937"></div>
<div class="abs" id="typing" style="left:526.3px;top:375.3px;font-size:28.5px;color:#55524f;line-height:34px;white-space:nowrap;letter-spacing:1.02px">1 participant typing</div>
<div class="abs" id="cnt" style="left:1848.2px;top:380.6px;font-size:29.3px;color:#4f4c4a;line-height:34px;white-space:nowrap;letter-spacing:-1.3px">12</div>
<svg class="abs" style="left:1886px;top:386px" width="28" height="24" viewBox="0 0 28 24" fill="none" stroke="#55524f" stroke-width="2.2" stroke-linecap="round"><circle cx="10.75" cy="6.75" r="4"/><path d="M2.85 19.4v-.3a4.500 4.500 0 0 1 4.500-4.500h7.050a4.500 4.500 0 0 1 4.500 4.500v.3a2.500 2.500 0 0 1-2.500 2.500H5.350a2.500 2.500 0 0 1-2.500-2.500z"/><path d="M19.800 3.270A4.600 4.600 0 0 1 19.800 11.230M22.300 14.200c2.200 1 3.300 3 3.300 5 0 1-.5 2-1.300 2.600"/></svg>
<div class="abs" id="q" style="left:459.7px;top:484.5px;font-size:38px;font-weight:700;color:#111;line-height:44px;white-space:nowrap;letter-spacing:0.43px">Describe academic writing in three words.</div>
<svg style="position:absolute;left:75.6px;top:461.2px" width="267.6" height="267.6" viewBox="0 0 267.6 267.6"><path fill="#000" d="M0 0h64.59v9.23h-64.59zM83.05 0h27.68v9.23h-27.68zM119.96 0h18.46v9.23h-18.46zM166.1 0h9.23v9.23h-9.23zM184.55 0h9.23v9.23h-9.23zM203.01 0h64.59v9.23h-64.59zM0 9.23h9.23v9.23h-9.23zM55.37 9.23h9.23v9.23h-9.23zM83.05 9.23h27.68v9.23h-27.68zM138.41 9.23h9.23v9.23h-9.23zM156.87 9.23h18.46v9.23h-18.46zM184.55 9.23h9.23v9.23h-9.23zM203.01 9.23h9.23v9.23h-9.23zM258.37 9.23h9.23v9.23h-9.23zM0 18.46h9.23v9.23h-9.23zM18.46 18.46h27.68v9.23h-27.68zM55.37 18.46h9.23v9.23h-9.23zM73.82 18.46h36.91v9.23h-36.91zM166.1 18.46h9.23v9.23h-9.23zM203.01 18.46h9.23v9.23h-9.23zM221.46 18.46h27.68v9.23h-27.68zM258.37 18.46h9.23v9.23h-9.23zM0 27.68h9.23v9.23h-9.23zM18.46 27.68h27.68v9.23h-27.68zM55.37 27.68h9.23v9.23h-9.23zM73.82 27.68h18.46v9.23h-18.46zM101.5 27.68h18.46v9.23h-18.46zM129.19 27.68h27.68v9.23h-27.68zM175.32 27.68h9.23v9.23h-9.23zM203.01 27.68h9.23v9.23h-9.23zM221.46 27.68h27.68v9.23h-27.68zM258.37 27.68h9.23v9.23h-9.23zM0 36.91h9.23v9.23h-9.23zM18.46 36.91h27.68v9.23h-27.68zM55.37 36.91h9.23v9.23h-9.23zM73.82 36.91h9.23v9.23h-9.23zM92.28 36.91h27.68v9.23h-27.68zM129.19 36.91h9.23v9.23h-9.23zM147.64 36.91h18.46v9.23h-18.46zM175.32 36.91h18.46v9.23h-18.46zM203.01 36.91h9.23v9.23h-9.23zM221.46 36.91h27.68v9.23h-27.68zM258.37 36.91h9.23v9.23h-9.23zM0 46.14h9.23v9.23h-9.23zM55.37 46.14h9.23v9.23h-9.23zM73.82 46.14h9.23v9.23h-9.23zM101.5 46.14h9.23v9.23h-9.23zM119.96 46.14h9.23v9.23h-9.23zM138.41 46.14h9.23v9.23h-9.23zM166.1 46.14h9.23v9.23h-9.23zM203.01 46.14h9.23v9.23h-9.23zM258.37 46.14h9.23v9.23h-9.23zM0 55.37h64.59v9.23h-64.59zM73.82 55.37h9.23v9.23h-9.23zM92.28 55.37h9.23v9.23h-9.23zM110.73 55.37h9.23v9.23h-9.23zM129.19 55.37h9.23v9.23h-9.23zM147.64 55.37h9.23v9.23h-9.23zM166.1 55.37h9.23v9.23h-9.23zM184.55 55.37h9.23v9.23h-9.23zM203.01 55.37h64.59v9.23h-64.59zM73.82 64.59h36.91v9.23h-36.91zM129.19 64.59h18.46v9.23h-18.46zM0 73.82h9.23v9.23h-9.23zM18.46 73.82h46.14v9.23h-46.14zM83.05 73.82h55.37v9.23h-55.37zM147.64 73.82h18.46v9.23h-18.46zM175.32 73.82h18.46v9.23h-18.46zM203.01 73.82h46.14v9.23h-46.14zM0 83.05h18.46v9.23h-18.46zM27.68 83.05h9.23v9.23h-9.23zM46.14 83.05h9.23v9.23h-9.23zM73.82 83.05h9.23v9.23h-9.23zM110.73 83.05h18.46v9.23h-18.46zM138.41 83.05h18.46v9.23h-18.46zM175.32 83.05h55.37v9.23h-55.37zM258.37 83.05h9.23v9.23h-9.23zM0 92.28h27.68v9.23h-27.68zM36.91 92.28h9.23v9.23h-9.23zM55.37 92.28h9.23v9.23h-9.23zM101.5 92.28h18.46v9.23h-18.46zM129.19 92.28h18.46v9.23h-18.46zM166.1 92.28h9.23v9.23h-9.23zM203.01 92.28h18.46v9.23h-18.46zM0 101.5h9.23v9.23h-9.23zM18.46 101.5h27.68v9.23h-27.68zM73.82 101.5h9.23v9.23h-9.23zM92.28 101.5h9.23v9.23h-9.23zM129.19 101.5h18.46v9.23h-18.46zM166.1 101.5h18.46v9.23h-18.46zM193.78 101.5h9.23v9.23h-9.23zM221.46 101.5h18.46v9.23h-18.46zM249.14 101.5h9.23v9.23h-9.23zM0 110.73h9.23v9.23h-9.23zM55.37 110.73h9.23v9.23h-9.23zM73.82 110.73h18.46v9.23h-18.46zM129.19 110.73h9.23v9.23h-9.23zM147.64 110.73h9.23v9.23h-9.23zM175.32 110.73h18.46v9.23h-18.46zM212.23 110.73h9.23v9.23h-9.23zM230.69 110.73h18.46v9.23h-18.46zM9.23 119.96h9.23v9.23h-9.23zM27.68 119.96h18.46v9.23h-18.46zM64.59 119.96h18.46v9.23h-18.46zM92.28 119.96h9.23v9.23h-9.23zM138.41 119.96h36.91v9.23h-36.91zM184.55 119.96h46.14v9.23h-46.14zM258.37 119.96h9.23v9.23h-9.23zM0 129.19h18.46v9.23h-18.46zM27.68 129.19h9.23v9.23h-9.23zM46.14 129.19h18.46v9.23h-18.46zM73.82 129.19h9.23v9.23h-9.23zM92.28 129.19h9.23v9.23h-9.23zM110.73 129.19h18.46v9.23h-18.46zM138.41 129.19h9.23v9.23h-9.23zM193.78 129.19h18.46v9.23h-18.46zM230.69 129.19h18.46v9.23h-18.46zM0 138.41h27.68v9.23h-27.68zM36.91 138.41h9.23v9.23h-9.23zM64.59 138.41h18.46v9.23h-18.46zM92.28 138.41h18.46v9.23h-18.46zM129.19 138.41h27.68v9.23h-27.68zM166.1 138.41h27.68v9.23h-27.68zM212.23 138.41h9.23v9.23h-9.23zM249.14 138.41h9.23v9.23h-9.23zM55.37 147.64h9.23v9.23h-9.23zM73.82 147.64h46.14v9.23h-46.14zM156.87 147.64h9.23v9.23h-9.23zM184.55 147.64h18.46v9.23h-18.46zM230.69 147.64h18.46v9.23h-18.46zM0 156.87h18.46v9.23h-18.46zM64.59 156.87h18.46v9.23h-18.46zM92.28 156.87h36.91v9.23h-36.91zM138.41 156.87h18.46v9.23h-18.46zM175.32 156.87h36.91v9.23h-36.91zM221.46 156.87h9.23v9.23h-9.23zM239.92 156.87h9.23v9.23h-9.23zM258.37 156.87h9.23v9.23h-9.23zM0 166.1h9.23v9.23h-9.23zM18.46 166.1h9.23v9.23h-9.23zM36.91 166.1h9.23v9.23h-9.23zM55.37 166.1h9.23v9.23h-9.23zM83.05 166.1h9.23v9.23h-9.23zM110.73 166.1h36.91v9.23h-36.91zM156.87 166.1h18.46v9.23h-18.46zM184.55 166.1h9.23v9.23h-9.23zM203.01 166.1h9.23v9.23h-9.23zM239.92 166.1h9.23v9.23h-9.23zM0 175.32h9.23v9.23h-9.23zM18.46 175.32h9.23v9.23h-9.23zM36.91 175.32h18.46v9.23h-18.46zM73.82 175.32h9.23v9.23h-9.23zM110.73 175.32h18.46v9.23h-18.46zM175.32 175.32h36.91v9.23h-36.91zM221.46 175.32h9.23v9.23h-9.23zM249.14 175.32h9.23v9.23h-9.23zM0 184.55h9.23v9.23h-9.23zM27.68 184.55h9.23v9.23h-9.23zM46.14 184.55h18.46v9.23h-18.46zM73.82 184.55h18.46v9.23h-18.46zM129.19 184.55h36.91v9.23h-36.91zM175.32 184.55h55.37v9.23h-55.37zM239.92 184.55h27.68v9.23h-27.68zM73.82 193.78h18.46v9.23h-18.46zM110.73 193.78h9.23v9.23h-9.23zM138.41 193.78h36.91v9.23h-36.91zM184.55 193.78h9.23v9.23h-9.23zM221.46 193.78h46.14v9.23h-46.14zM0 203.01h64.59v9.23h-64.59zM92.28 203.01h9.23v9.23h-9.23zM110.73 203.01h9.23v9.23h-9.23zM138.41 203.01h9.23v9.23h-9.23zM156.87 203.01h9.23v9.23h-9.23zM175.32 203.01h18.46v9.23h-18.46zM203.01 203.01h9.23v9.23h-9.23zM221.46 203.01h27.68v9.23h-27.68zM0 212.23h9.23v9.23h-9.23zM55.37 212.23h9.23v9.23h-9.23zM73.82 212.23h18.46v9.23h-18.46zM129.19 212.23h18.46v9.23h-18.46zM166.1 212.23h9.23v9.23h-9.23zM184.55 212.23h9.23v9.23h-9.23zM221.46 212.23h9.23v9.23h-9.23zM249.14 212.23h9.23v9.23h-9.23zM0 221.46h9.23v9.23h-9.23zM18.46 221.46h27.68v9.23h-27.68zM55.37 221.46h9.23v9.23h-9.23zM73.82 221.46h18.46v9.23h-18.46zM138.41 221.46h18.46v9.23h-18.46zM184.55 221.46h46.14v9.23h-46.14zM239.92 221.46h27.68v9.23h-27.68zM0 230.69h9.23v9.23h-9.23zM18.46 230.69h27.68v9.23h-27.68zM55.37 230.69h9.23v9.23h-9.23zM73.82 230.69h18.46v9.23h-18.46zM110.73 230.69h27.68v9.23h-27.68zM147.64 230.69h9.23v9.23h-9.23zM175.32 230.69h18.46v9.23h-18.46zM212.23 230.69h9.23v9.23h-9.23zM230.69 230.69h36.91v9.23h-36.91zM0 239.92h9.23v9.23h-9.23zM18.46 239.92h27.68v9.23h-27.68zM55.37 239.92h9.23v9.23h-9.23zM73.82 239.92h9.23v9.23h-9.23zM129.19 239.92h18.46v9.23h-18.46zM156.87 239.92h9.23v9.23h-9.23zM175.32 239.92h83.05v9.23h-83.05zM0 249.14h9.23v9.23h-9.23zM55.37 249.14h9.23v9.23h-9.23zM83.05 249.14h18.46v9.23h-18.46zM110.73 249.14h9.23v9.23h-9.23zM147.64 249.14h9.23v9.23h-9.23zM166.1 249.14h9.23v9.23h-9.23zM184.55 249.14h9.23v9.23h-9.23zM212.23 249.14h27.68v9.23h-27.68zM249.14 249.14h9.23v9.23h-9.23zM0 258.37h64.59v9.23h-64.59zM73.82 258.37h9.23v9.23h-9.23zM101.5 258.37h18.46v9.23h-18.46zM129.19 258.37h27.68v9.23h-27.68zM175.32 258.37h9.23v9.23h-9.23zM193.78 258.37h9.23v9.23h-9.23zM221.46 258.37h27.68v9.23h-27.68zM0 0h9.23v64.59h-9.23zM0 73.82h9.23v46.14h-9.23zM0 129.19h9.23v18.46h-9.23zM0 156.87h9.23v36.91h-9.23zM0 203.01h9.23v64.59h-9.23zM9.23 83.05h9.23v18.46h-9.23zM9.23 119.96h9.23v27.68h-9.23zM18.46 18.46h9.23v27.68h-9.23zM18.46 92.28h9.23v18.46h-9.23zM18.46 166.1h9.23v18.46h-9.23zM18.46 221.46h9.23v27.68h-9.23zM27.68 18.46h9.23v27.68h-9.23zM27.68 73.82h9.23v18.46h-9.23zM27.68 119.96h9.23v18.46h-9.23zM27.68 221.46h9.23v27.68h-9.23zM36.91 18.46h9.23v27.68h-9.23zM36.91 92.28h9.23v18.46h-9.23zM36.91 166.1h9.23v18.46h-9.23zM36.91 221.46h9.23v27.68h-9.23zM46.14 73.82h9.23v18.46h-9.23zM46.14 175.32h9.23v18.46h-9.23zM55.37 0h9.23v64.59h-9.23zM55.37 203.01h9.23v64.59h-9.23zM73.82 18.46h9.23v55.37h-9.23zM73.82 101.5h9.23v64.59h-9.23zM73.82 175.32h9.23v27.68h-9.23zM73.82 212.23h9.23v36.91h-9.23zM83.05 0h9.23v36.91h-9.23zM83.05 64.59h9.23v18.46h-9.23zM83.05 184.55h9.23v18.46h-9.23zM83.05 212.23h9.23v27.68h-9.23zM92.28 0h9.23v27.68h-9.23zM92.28 55.37h9.23v27.68h-9.23zM92.28 119.96h9.23v46.14h-9.23zM101.5 0h9.23v55.37h-9.23zM101.5 64.59h9.23v18.46h-9.23zM101.5 138.41h9.23v27.68h-9.23zM110.73 27.68h9.23v18.46h-9.23zM110.73 73.82h9.23v27.68h-9.23zM110.73 147.64h9.23v36.91h-9.23zM110.73 193.78h9.23v18.46h-9.23zM110.73 249.14h9.23v18.46h-9.23zM119.96 73.82h9.23v18.46h-9.23zM119.96 156.87h9.23v27.68h-9.23zM129.19 27.68h9.23v18.46h-9.23zM129.19 55.37h9.23v27.68h-9.23zM129.19 92.28h9.23v27.68h-9.23zM129.19 230.69h9.23v18.46h-9.23zM138.41 83.05h9.23v27.68h-9.23zM138.41 119.96h9.23v27.68h-9.23zM138.41 156.87h9.23v18.46h-9.23zM138.41 184.55h9.23v46.14h-9.23zM147.64 27.68h9.23v18.46h-9.23zM147.64 73.82h9.23v18.46h-9.23zM147.64 110.73h9.23v18.46h-9.23zM147.64 184.55h9.23v18.46h-9.23zM147.64 221.46h9.23v18.46h-9.23zM147.64 249.14h9.23v18.46h-9.23zM156.87 184.55h9.23v27.68h-9.23zM166.1 0h9.23v27.68h-9.23zM166.1 46.14h9.23v18.46h-9.23zM166.1 92.28h9.23v18.46h-9.23zM175.32 27.68h9.23v18.46h-9.23zM175.32 73.82h9.23v18.46h-9.23zM175.32 101.5h9.23v18.46h-9.23zM175.32 175.32h9.23v18.46h-9.23zM175.32 230.69h9.23v18.46h-9.23zM184.55 0h9.23v18.46h-9.23zM184.55 73.82h9.23v18.46h-9.23zM184.55 110.73h9.23v18.46h-9.23zM184.55 138.41h9.23v119.96h-9.23zM193.78 119.96h9.23v18.46h-9.23zM193.78 147.64h9.23v18.46h-9.23zM193.78 175.32h9.23v18.46h-9.23zM203.01 0h9.23v64.59h-9.23zM203.01 73.82h9.23v27.68h-9.23zM203.01 119.96h9.23v18.46h-9.23zM203.01 156.87h9.23v36.91h-9.23zM212.23 73.82h9.23v27.68h-9.23zM212.23 110.73h9.23v18.46h-9.23zM212.23 221.46h9.23v36.91h-9.23zM221.46 18.46h9.23v27.68h-9.23zM221.46 73.82h9.23v18.46h-9.23zM221.46 175.32h9.23v55.37h-9.23zM221.46 239.92h9.23v27.68h-9.23zM230.69 18.46h9.23v27.68h-9.23zM230.69 101.5h9.23v18.46h-9.23zM230.69 193.78h9.23v18.46h-9.23zM230.69 230.69h9.23v36.91h-9.23zM239.92 18.46h9.23v27.68h-9.23zM239.92 147.64h9.23v27.68h-9.23zM239.92 184.55h9.23v27.68h-9.23zM239.92 221.46h9.23v27.68h-9.23zM249.14 175.32h9.23v27.68h-9.23zM249.14 212.23h9.23v46.14h-9.23zM258.37 0h9.23v64.59h-9.23zM258.37 184.55h9.23v18.46h-9.23zM258.37 221.46h9.23v18.46h-9.23z"/></svg>
<div class="abs" id="j1" style="left:0;top:970.5px;width:418.5px;text-align:center;font-size:58px;color:#4a4745;line-height:64px;letter-spacing:0.85px">Join at</div>
<div class="abs" id="j2" style="left:0;top:1051.5px;width:418.5px;text-align:center;font-size:69px;font-weight:700;color:#353331;line-height:76px;letter-spacing:0.9px">slido.com</div>
<div class="abs" id="j3" style="left:0;top:1138.5px;width:416px;text-align:center;font-size:58px;font-weight:700;color:#353331;line-height:70px;letter-spacing:1.9px;word-spacing:-3px">#4071 516</div>
<div class="tg" style="left:497px;top:612.5px;width:323.5px;height:50.0px;letter-spacing:-0.102px;padding-left:11.1px">detached from reality</div>
<div class="tg" style="left:1095.5px;top:611px;width:227.0px;height:50px;letter-spacing:-0.253px;padding-left:11.1px">smart too long</div>
<div class="tg" style="left:1073px;top:673.5px;width:153px;height:50.0px;letter-spacing:0.082px;padding-left:11.1px">technical</div>
<div class="tg" style="left:555px;top:693.5px;width:358.5px;height:50.0px;letter-spacing:-0.228px;padding-left:11.1px">for an specific audience</div>
<div class="tg" style="left:1336px;top:683.5px;width:422px;height:50.0px;letter-spacing:-0.198px;padding-left:11.1px">Sometimes far from practice</div>
<div class="tg" style="left:713px;top:755.5px;width:200.5px;height:50.0px;letter-spacing:-0.392px;padding-left:11.1px">I wish I knew</div>
<div class="tg" style="left:1347px;top:747.5px;width:169.5px;height:50.0px;letter-spacing:-0.107px;padding-left:11.1px">innovative</div>
<div class="tg" style="left:1370.5px;top:811px;width:147.5px;height:50px;letter-spacing:0.037px;padding-left:11.1px">quotable</div>
<div class="tg" style="left:736px;top:841.5px;width:137px;height:50.0px;letter-spacing:-0.033px;padding-left:11.1px">Specific</div>
<div class="tg" style="left:1528.5px;top:870px;width:115.5px;height:50px;letter-spacing:0.261px;padding-left:11.1px">dreary</div>
<div class="tg" style="left:590.5px;top:902px;width:127.0px;height:50px;letter-spacing:-0.281px;padding-left:11.1px">Precise</div>
<div class="tg" style="left:1705.5px;top:911.5px;width:127.5px;height:50.0px;letter-spacing:0.038px;padding-left:11.1px">Factual</div>
<div class="tg" style="left:730px;top:943px;width:114.5px;height:50px;letter-spacing:0.376px;padding-left:11.1px">expert</div>
<div class="tg" style="left:1517.5px;top:965.5px;width:83.0px;height:50.0px;letter-spacing:-0.628px;padding-left:11.1px">long</div>
<div class="tg" style="left:1616.5px;top:973px;width:141.5px;height:50px;letter-spacing:0.323px;padding-left:11.1px">abstract</div>
<div class="tg" style="left:570px;top:1005.5px;width:272px;height:50.0px;letter-spacing:-0.115px;padding-left:11.1px">specific language</div>
<div class="tg" style="left:483px;top:1055px;width:72.5px;height:50px;letter-spacing:0.090px;padding-left:11.1px">Dry</div>
<div class="tg" style="left:674px;top:1093px;width:236px;height:50px;letter-spacing:-0.102px;padding-left:11.1px">evidencebased</div>
<div class="tg" style="left:603px;top:1154.5px;width:147.5px;height:50.0px;letter-spacing:-0.200px;padding-left:11.1px">Complex</div>
<div class="tg" style="left:485px;top:1246px;width:351px;height:50px;letter-spacing:-0.225px;padding-left:11.1px">Unnecessarily complex</div>
<div class="tg" style="left:848.5px;top:1263.5px;width:220.5px;height:50.0px;letter-spacing:-0.361px;padding-left:11.1px">takes too long</div>
<div class="tg" style="left:1392.5px;top:1265.5px;width:175.5px;height:50.0px;letter-spacing:0.144px;padding-left:11.1px">theoretical</div>
<div class="bg" style="left:928.3px;top:738.8px;width:392.29999999999995px;height:161.20000000000005px"><span style="left:15.5px;top:20.0px;letter-spacing:-0.922px">Dense</span></div>
<div class="bg" style="left:860px;top:912px;width:643.3px;height:161px"><span style="left:18.5px;top:19.2px;letter-spacing:-0.389px">Structured</span></div>
<div class="bg" style="left:922.3px;top:1090.2px;width:679.2px;height:161.20000000000005px"><span style="left:15.0px;top:19.8px;letter-spacing:-0.432px">Informative</span></div>
<svg class="abs" style="left:1415px;top:468px;filter:drop-shadow(0 1.5px 1.5px rgba(0,0,0,.45))" width="26" height="34" viewBox="0 0 26 34"><path d="M5.500 5V22L9.300 18.600 12.600 26.500 15.400 25.300 12.200 17.600 17.700 17.200Z" fill="#000" stroke="#fff" stroke-width="1.500" stroke-linejoin="round"/><path d="M5.500 5V22L9.300 18.600 12.600 26.500 15.400 25.300 12.200 17.600 17.700 17.200Z" fill="#000"/></svg>
</body></html>
